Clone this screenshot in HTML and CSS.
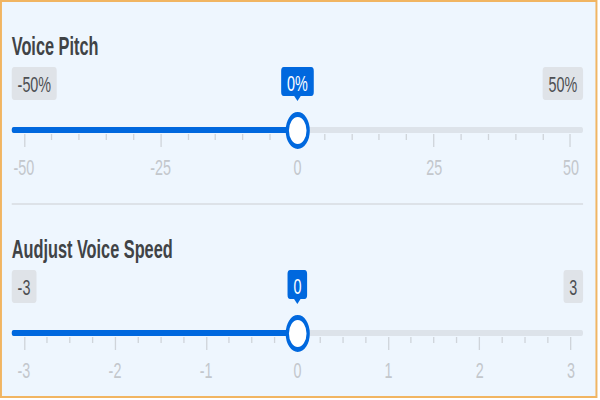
FILE: index.html
```html
<!DOCTYPE html>
<html lang="en">
<head>
  <meta charset="UTF-8">
  <meta name="viewport" content="width=device-width, initial-scale=1.0">
  <title>Voice Settings</title>
  <link rel="stylesheet" href="styles.css">
</head>
<body>
  <div class="stage">
    <div class="panel">
      <section class="setting">
        <h2 class="setting-title">Voice Pitch</h2>
        <div class="range-ends">
          <span class="end-badge">-50%</span>
          <span class="end-badge">50%</span>
        </div>
        <div class="slider">
          <div class="slider-fill" style="width: 50%"></div>
          <div class="slider-thumb" style="left: 50%"><span class="slider-bubble">0%</span></div>
        </div>
        <div class="ticks">
          <i class="tick major"></i><i class="tick"></i><i class="tick"></i><i class="tick"></i><i class="tick"></i>
          <i class="tick major"></i><i class="tick"></i><i class="tick"></i><i class="tick"></i><i class="tick"></i>
          <i class="tick major"></i><i class="tick"></i><i class="tick"></i><i class="tick"></i><i class="tick"></i>
          <i class="tick major"></i><i class="tick"></i><i class="tick"></i><i class="tick"></i><i class="tick"></i>
          <i class="tick major"></i>
        </div>
        <div class="tick-labels">
          <span>-50</span><span>-25</span><span>0</span><span>25</span><span>50</span>
        </div>
      </section>

      <hr class="divider">

      <section class="setting speed">
        <h2 class="setting-title">Audjust Voice Speed</h2>
        <div class="range-ends">
          <span class="end-badge">-3</span>
          <span class="end-badge">3</span>
        </div>
        <div class="slider">
          <div class="slider-fill" style="width: 50%"></div>
          <div class="slider-thumb" style="left: 50%"><span class="slider-bubble">0</span></div>
        </div>
        <div class="ticks">
          <i class="tick major"></i><i class="tick"></i><i class="tick"></i><i class="tick"></i>
          <i class="tick major"></i><i class="tick"></i><i class="tick"></i><i class="tick"></i>
          <i class="tick major"></i><i class="tick"></i><i class="tick"></i><i class="tick"></i>
          <i class="tick major"></i><i class="tick"></i><i class="tick"></i><i class="tick"></i>
          <i class="tick major"></i><i class="tick"></i><i class="tick"></i><i class="tick"></i>
          <i class="tick major"></i><i class="tick"></i><i class="tick"></i><i class="tick"></i>
          <i class="tick major"></i>
        </div>
        <div class="tick-labels">
          <span>-3</span><span>-2</span><span>-1</span><span>0</span><span>1</span><span>2</span><span>3</span>
        </div>
      </section>
    </div>
  </div>
</body>
</html>
```
FILE: styles.css
```css
* {
  box-sizing: border-box;
}
body {
  margin: 0;
  background: #fff;
  font-family: 'Liberation Sans', Arial, sans-serif;
  overflow: hidden;
  height: 400px;
}
/* the reference is squeezed horizontally, so lay out wide and squeeze */
.stage {
  width: 916px;
  height: 400px;
  transform: scaleX(0.6522);
  transform-origin: 0 0;
}
.panel {
  height: 398px;
  background: #eef6fe;
  border: solid #f1b562;
  border-width: 2px 3px;
  padding: 30px 19px 0 15px;
}
.setting-title {
  margin: 0;
  font-size: 25px;
  line-height: 28px;
  font-weight: 700;
  color: #404346;
}
.speed .setting-title {
  margin-top: 30px;
}
.range-ends {
  display: flex;
  justify-content: space-between;
  margin-top: 7px;
}
.end-badge {
  background: #dfe3e8;
  color: #4d4f52;
  font-size: 22px;
  line-height: 25px;
  padding: 5px 9px 3px;
  border-radius: 4px;
}
.slider {
  position: relative;
  height: 6px;
  margin-top: 27px;
  background: #dde3ea;
  border-radius: 3px;
}
.slider-fill {
  height: 100%;
  background: #0068de;
  border-radius: 3px;
}
.slider-thumb {
  position: absolute;
  top: 50%;
  width: 37px;
  height: 37px;
  margin: -18.5px 0 0 -18.5px;
  border: 5px solid #0068de;
  border-radius: 50%;
  background: #fff;
}
.slider-bubble {
  position: absolute;
  bottom: calc(100% + 21px);
  left: 50%;
  transform: translateX(-50%);
  background: #0068de;
  color: #fff;
  font-size: 22px;
  line-height: 22px;
  padding: 6px 9px 1px;
  border-radius: 4px;
  white-space: nowrap;
}
.slider-bubble::after {
  content: "";
  position: absolute;
  top: 100%;
  left: 50%;
  margin-left: -5px;
  border: 5px solid transparent;
  border-top-color: #0068de;
  border-bottom: 0;
}
.ticks {
  display: flex;
  justify-content: space-between;
  align-items: flex-start;
  height: 13px;
  margin: 1px 18.5px 0;
}
.tick {
  width: 2px;
  height: 6px;
  background: #cfd4da;
}
.tick.major {
  height: 13px;
}
.tick-labels {
  display: flex;
  justify-content: space-between;
  margin: 9px 18.5px 0;
  font-size: 22px;
  line-height: 24px;
  color: #c3c7cc;
}
.tick-labels span {
  width: 0;
  display: flex;
  justify-content: center;
  white-space: nowrap;
}
.divider {
  border: 0;
  height: 2px;
  margin: 23px 0 0;
  background: #dde2e8;
}
```
